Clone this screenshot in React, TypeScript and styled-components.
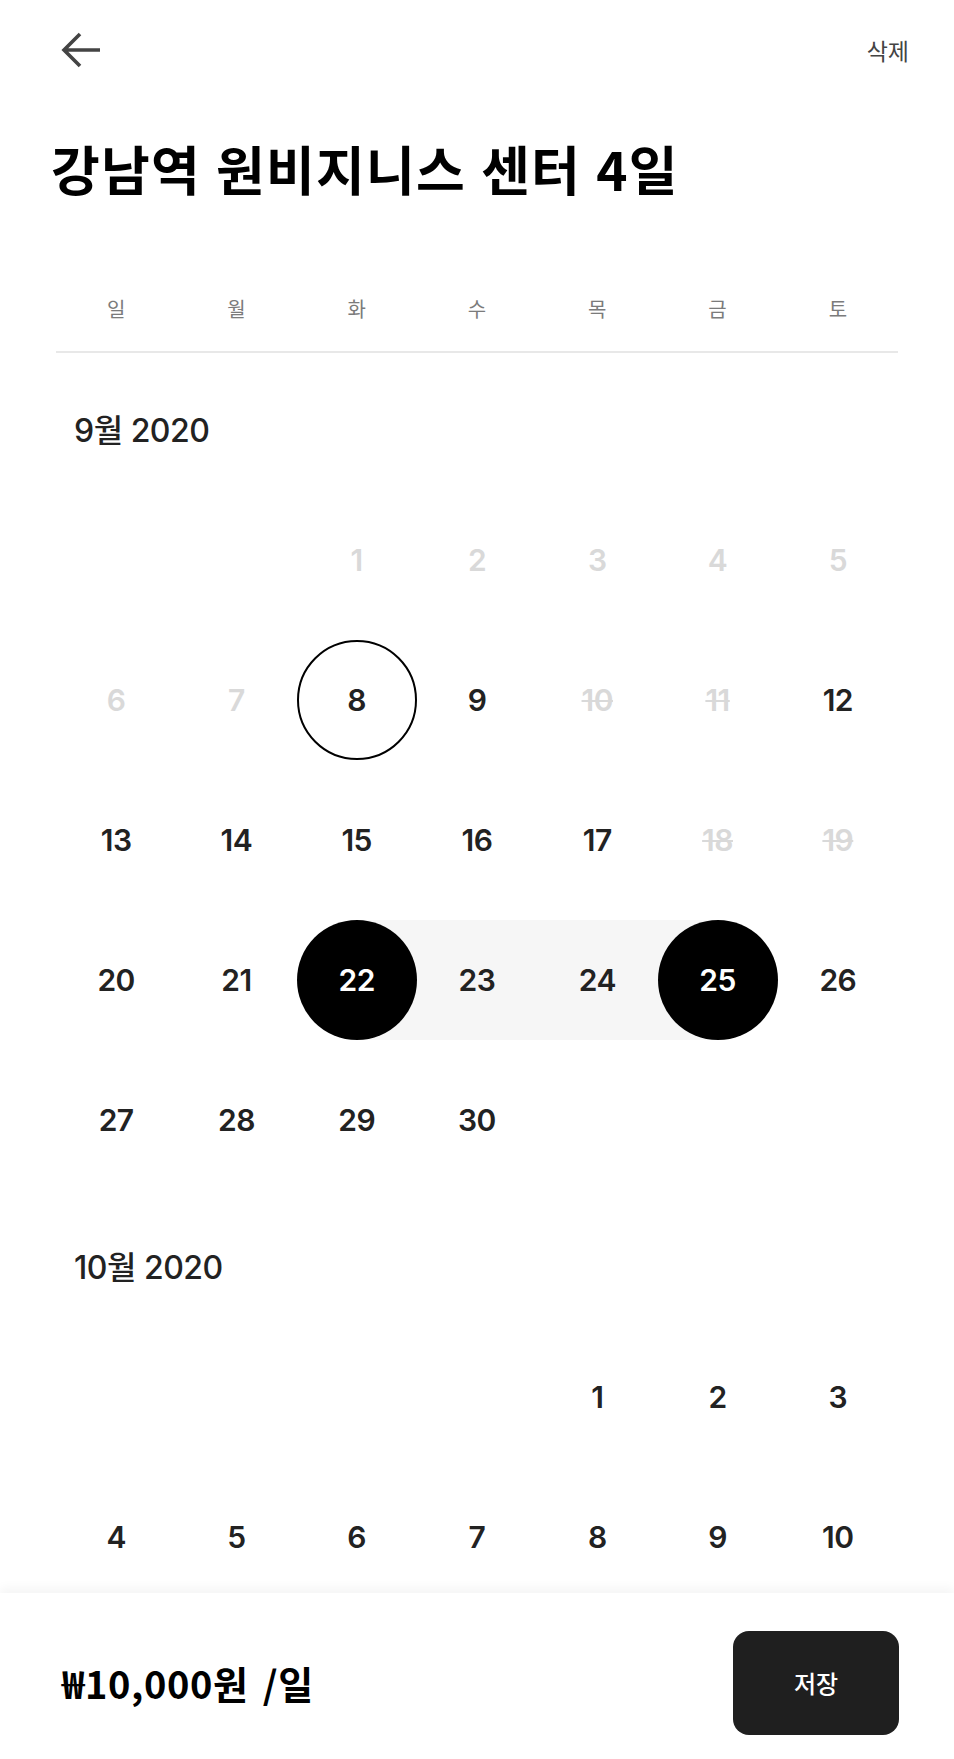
import React from "react";
import styled, { createGlobalStyle, css } from "styled-components";

const GlobalStyle = createGlobalStyle`
  html, body { margin: 0; padding: 0; background: #ffffff; }
  * { box-sizing: border-box; }
  body { font-family: "Noto Sans CJK KR", "Noto Sans", sans-serif; }
`;

const KR = `"Noto Sans CJK KR", "Noto Sans", sans-serif`;
const NUM = `Inter, "Noto Sans CJK KR", sans-serif`;

const Page = styled.div`
  height: 100vh;
  display: flex;
  flex-direction: column;
  overflow: hidden;
  background: #ffffff;
`;

const Header = styled.header`
  height: 100px;
  flex-shrink: 0;
  display: flex;
  align-items: center;
  justify-content: space-between;
  padding: 0 45px 0 59px;
`;

const IconButton = styled.button`
  border: none;
  background: none;
  padding: 0;
  display: flex;
  cursor: pointer;
`;

const TextButton = styled.button`
  border: none;
  background: none;
  padding: 0;
  font: 400 23px/30px ${KR};
  color: #444444;
  cursor: pointer;
`;

const Title = styled.h1`
  margin: 38px 0 0;
  padding-left: 51px;
  font: 700 53px/60px ${KR};
  color: #000000;
  flex-shrink: 0;
  letter-spacing: 1.2px;
  word-spacing: 2px;
`;

const Body = styled.main`
  flex: 1;
  min-height: 0;
  overflow: hidden;
  padding: 0 56px;
`;

const WeekRow = styled.div`
  display: grid;
  grid-template-columns: repeat(7, 1fr);
  margin-top: 81px;
  padding-bottom: 12px;
  border-bottom: 2px solid #e8e8e8;
`;

const WeekLabel = styled.div`
  height: 60px;
  display: flex;
  align-items: center;
  justify-content: center;
  font: 400 20px/1 ${KR};
  color: #7b7b7b;
`;

const MonthTitle = styled.h2`
  margin: 58px 0 39px;
  padding-left: 18px;
  font: 500 32px/40px ${NUM};
  color: #222222;
  letter-spacing: -0.5px;
`;

const Grid = styled.div`
  display: grid;
  grid-template-columns: repeat(7, 1fr);
  grid-auto-rows: 140px;
`;

const Cell = styled.div`
  display: flex;
  align-items: center;
`;

type BandKind = "none" | "start" | "mid" | "end";

const BAND = "#f6f6f6";

const bandBg: Record<BandKind, string> = {
  none: "transparent",
  start: `linear-gradient(to right, transparent 50%, ${BAND} 50%)`,
  mid: BAND,
  end: `linear-gradient(to right, ${BAND} 50%, transparent 50%)`,
};

const Band = styled.div<{ $band: BandKind }>`
  width: 100%;
  height: 120px;
  display: flex;
  justify-content: center;
  background: ${(p) => bandBg[p.$band]};
`;

type Variant = "normal" | "past" | "blocked" | "today" | "selected";

const Day = styled.span<{ $variant: Variant }>`
  width: 120px;
  height: 120px;
  border-radius: 50%;
  display: flex;
  align-items: center;
  justify-content: center;
  font: 600 30px/1 ${NUM};
  letter-spacing: -0.5px;
  color: #222222;
  ${(p) =>
    p.$variant === "past" &&
    css`
      color: #d9d9d9;
    `}
  ${(p) =>
    p.$variant === "blocked" &&
    css`
      color: #d9d9d9;
      text-decoration: line-through;
      text-decoration-thickness: 2px;
    `}
  ${(p) =>
    p.$variant === "today" &&
    css`
      border: 2px solid #000000;
      background: #ffffff;
    `}
  ${(p) =>
    p.$variant === "selected" &&
    css`
      background: #000000;
      color: #ffffff;
    `}
`;

const Footer = styled.footer`
  height: 166px;
  flex-shrink: 0;
  display: flex;
  align-items: center;
  justify-content: space-between;
  padding: 14px 55px 0 62px;
  background: #ffffff;
  box-shadow: 0 -5px 10px rgba(0, 0, 0, 0.045);
  position: relative;
`;

const Price = styled.div`
  font: 700 38px/1 ${KR};
  color: #000000;
  letter-spacing: 0.6px;
  word-spacing: 5px;
`;

const SaveButton = styled.button`
  width: 166px;
  height: 104px;
  border: none;
  border-radius: 16px;
  background: #1f1f1f;
  color: #ffffff;
  font: 500 24px/1 ${KR};
  cursor: pointer;
`;

const WEEK = ["일", "월", "화", "수", "목", "금", "토"];

type DayInfo = { day: number; variant: Variant; band: BandKind };

function buildMonth(
  startWeekday: number,
  days: number,
  info: (d: number) => { variant: Variant; band: BandKind }
): (DayInfo | null)[] {
  const cells: (DayInfo | null)[] = [];
  for (let i = 0; i < startWeekday; i++) cells.push(null);
  for (let d = 1; d <= days; d++) cells.push({ day: d, ...info(d) });
  return cells;
}

const september = buildMonth(2, 30, (d) => {
  if (d <= 7) return { variant: "past", band: "none" };
  if (d === 8) return { variant: "today", band: "none" };
  if ([10, 11, 18, 19].includes(d)) return { variant: "blocked", band: "none" };
  if (d === 22) return { variant: "selected", band: "start" };
  if (d === 25) return { variant: "selected", band: "end" };
  if (d === 23 || d === 24) return { variant: "normal", band: "mid" };
  return { variant: "normal", band: "none" };
});

/* only the weeks of October that are visible above the footer */
const october = buildMonth(4, 10, () => ({ variant: "normal", band: "none" }));

const BackIcon = () => (
  <svg width="42" height="40" viewBox="0 0 42 40" fill="none">
    <path
      d="M41 20H5M21 4L5 20l16 16"
      stroke="#444444"
      strokeWidth="3.6"
      strokeLinejoin="miter"
    />
  </svg>
);

const Month: React.FC<{ title: string; cells: (DayInfo | null)[] }> = ({
  title,
  cells,
}) => (
  <section>
    <MonthTitle>{title}</MonthTitle>
    <Grid>
      {cells.map((c, i) => (
        <Cell key={i}>
          {c && (
            <Band $band={c.band}>
              <Day $variant={c.variant}>{c.day}</Day>
            </Band>
          )}
        </Cell>
      ))}
    </Grid>
  </section>
);

export default function App() {
  return (
    <>
      <GlobalStyle />
      <Page>
        <Header>
          <IconButton aria-label="뒤로">
            <BackIcon />
          </IconButton>
          <TextButton>삭제</TextButton>
        </Header>
        <Title>강남역 원비지니스 센터 4일</Title>
        <Body>
          <WeekRow>
            {WEEK.map((w) => (
              <WeekLabel key={w}>{w}</WeekLabel>
            ))}
          </WeekRow>
          <Month title="9월 2020" cells={september} />
          <Month title="10월 2020" cells={october} />
        </Body>
        <Footer>
          <Price>₩10,000원 /일</Price>
          <SaveButton>저장</SaveButton>
        </Footer>
      </Page>
    </>
  );
}
